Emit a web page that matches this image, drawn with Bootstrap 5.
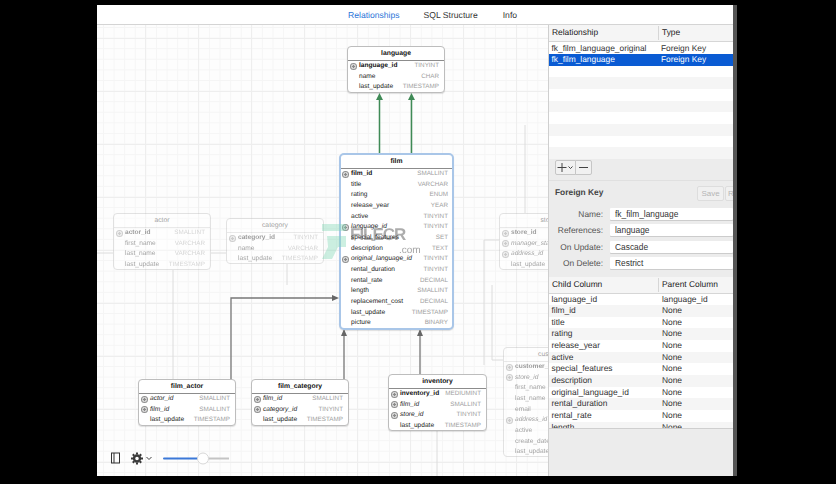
<!DOCTYPE html>
<html lang="en">
<head>
<meta charset="utf-8">
<title>Relationships</title>
<link href="https://cdn.jsdelivr.net/npm/bootstrap@5.3.0/dist/css/bootstrap.min.css" rel="stylesheet">
<style>
html,body{height:100%;}
body{background:#000;font-family:"Liberation Sans",Arial,sans-serif;font-size:8.4px;color:#222;overflow:hidden;text-rendering:geometricPrecision;}
.app-window{margin-left:97px;margin-top:5px;width:640px;height:471px;background:#ececec;filter:blur(.35px);border-right:4px solid #555;}
.top-tabs{height:20px;background:#fff;border-bottom:1px solid #d4d4d4;flex:none;}
.top-tabs .nav-link{padding:0;font-size:8.6px;color:#333;line-height:20px;}
.top-tabs .nav-link.active{color:#2a74d8;}
.tab-a{margin-left:251px;}
.tab-b{margin-left:24px;}
.tab-c{margin-left:25px;}
.work{min-height:0;}
.canvas{position:relative;width:452px;flex:none;overflow:hidden;background-color:#fdfdfd;
 background-image:linear-gradient(90deg,#eeeeee 1px,transparent 1px),linear-gradient(#eeeeee 1px,transparent 1px),linear-gradient(90deg,#f5f5f5 1px,transparent 1px),linear-gradient(#f5f5f5 1px,transparent 1px);
 background-size:53px 53px,53px 53px,10.6px 10.6px,10.6px 10.6px;background-position:48px 13px,48px 13px,6px 2px,6px 2px;border-right:1px solid #cfcfcf;}
.links{position:absolute;left:0;top:0;width:452px;height:451px;}
.erd{position:absolute;background:#fff;border:1px solid #bdbdbd;border-radius:4px;font-size:6.6px;line-height:10.67px;box-shadow:0 1px 1px rgba(0,0,0,.12);z-index:1;}
.erd-h{height:14px;line-height:13px;font-size:6.8px;font-weight:700;text-align:center;border-bottom:1px solid #8c8c8c;color:#111;white-space:nowrap;overflow:hidden;}
.erd-r{position:relative;display:flex;justify-content:space-between;padding-left:11px;padding-right:5px;height:10.67px;white-space:nowrap;color:#222;}
.erd-r>span:last-child{color:#a0a0a0;font-size:6.3px;}
.erd-r.pk>span:first-child{font-weight:700;color:#111;}
.erd-r.fk>span:first-child{font-style:italic;}
.erd-r.pk::before,.erd-r.fk::before{content:"";position:absolute;left:1.5px;top:1.7px;width:7px;height:7px;border-radius:50%;background:radial-gradient(circle,#8a8a8a 0 1px,#cfcfcf 1.4px 2.4px,#8e8e8e 3px);}
.faded{opacity:.42;box-shadow:none;}
.faded .erd-h{border-bottom-color:#ccc;font-weight:400;}
.sel{border:2px solid #a9c6e8;border-radius:5px;}
.sel .erd-r{padding-left:10px;padding-right:4px;}
.sel .erd-r.pk::before,.sel .erd-r.fk::before{left:.5px;}
.n-language{left:250px;top:21px;width:98px;height:47px;}
.n-film{left:242px;top:128px;width:115px;height:177px;}
.n-actor{left:16px;top:188px;width:98px;height:57px;}
.n-category{left:129px;top:193px;width:98px;height:46px;}
.n-store{left:402px;top:188px;width:98px;height:57px;}
.n-fa{left:41px;top:354px;width:98px;height:47px;}
.n-fc{left:154px;top:354px;width:98px;height:47px;}
.n-inv{left:291px;top:349px;width:99px;height:57px;}
.n-cust{left:406px;top:322px;width:98px;height:110px;}
.wm{position:absolute;z-index:2;pointer-events:none;white-space:nowrap;}
.wm-text{left:253px;top:199px;font-size:17px;font-weight:700;color:rgba(70,70,70,.45);line-height:22px;letter-spacing:-1px;}
.wm-com{left:302px;top:220px;font-size:10px;color:rgba(70,70,70,.5);line-height:11px;}
.wm-shape{left:225px;top:198px;width:24px;height:37px;}
.tool-side{position:absolute;left:13px;top:427px;z-index:3;}
.tool-gear{position:absolute;left:33px;top:425px;width:26px;height:17px;z-index:3;}
.zoomer{position:absolute;left:66px;top:425px;width:66px;height:17px;z-index:3;}
.side{width:184px;flex:none;overflow:hidden;}
.grid-h{height:17px;flex:none;background:#f5f5f5;border-bottom:1px solid #d6d6d6;line-height:15px;font-size:8.4px;}
.grid-h>div{padding-left:3px;}
.c1{width:109px;flex:none;white-space:nowrap;overflow:hidden;}
.c2{flex:1;white-space:nowrap;}
.grid-h .c2{border-left:1px solid #d6d6d6;margin:1px 0;line-height:13px;}
.rows-top{height:111px;flex:none;background:#fff;border-bottom:1px solid #cfcfcf;padding-top:.5px;}
.rows-bot{height:135px;flex:none;overflow:hidden;background:#fff;border-bottom:1px solid #cfcfcf;}
.grid-r{height:11.67px;line-height:11.67px;font-size:8.4px;color:#333;}
.grid-r .c1{padding-left:2.5px;}
.grid-r .c2{padding-left:4px;}
.rows-top .grid-r .c2{padding-left:3px;}
.grid-r.alt{background:#f5f5f5;}
.grid-r.pick{background:#0a5bd3;color:#fff;}
.act-bar{height:28px;flex:none;padding:7px 0 0 6px;border-bottom:1px solid #e0e0e0;}
.act-bar .btn-group{height:15px;}
.act-bar .btn{padding:0;height:15px;border:1px solid #c6c6c6;border-radius:2px;background:#f1f1f1;display:flex;align-items:center;justify-content:center;}
.act-add{width:21px;}
.act-del{width:17px;}
.fk-head{height:27px;flex:none;padding-left:6px;}
.fk-title{font-weight:700;font-size:8.4px;color:#444;line-height:22px;width:142px;flex:none;white-space:nowrap;}
.fk-btn{height:15px;flex:none;padding:0;font-size:8px;color:#b5b5b5;background:#f0f0f0;border:1px solid #ddd;border-radius:2px;line-height:13px;margin-top:5px;}
.fk-save{width:27px;}
.fk-rev{width:27px;margin-left:1px;text-align:left;padding-left:2px;}
.fk-form{flex:none;height:68.500px;}
.fk-line{height:16.400px;align-items:flex-start;}
.fk-line label{width:54px;flex:none;text-align:right;color:#555;font-size:8.4px;line-height:12px;}
.fk-line .form-control{margin-left:7px;width:123px;height:12px;min-height:0;padding:0 0 0 5px;font-size:8.4px;line-height:12px;border:0;border-radius:1px;color:#333;background:#fff;box-shadow:0 1px 0 #ccc;}
</style>
</head>
<body>
<div class="app-window d-flex flex-column">
  <ul class="nav top-tabs">
    <li class="nav-item tab-a"><a class="nav-link active" href="#">Relationships</a></li>
    <li class="nav-item tab-b"><a class="nav-link" href="#">SQL Structure</a></li>
    <li class="nav-item tab-c"><a class="nav-link" href="#">Info</a></li>
  </ul>
  <div class="work d-flex flex-grow-1">
    <div class="canvas">
      <svg class="links" viewBox="0 0 452 451" fill="none">
        <g stroke="#dcdcdc" stroke-width="1">
          <path d="M76 245V354M190 239V260M0 228H16M114 228H129M387 215H402M428 188V100M387 215V340M395 260V335H406M340 406V451"/>
        </g>
        <g stroke="#3f8a56" stroke-width="1.500">
          <path d="M282.500 128V74M314.500 128V74"/>
        </g>
        <path d="M282.500 68l-3.500 7h7zM314.500 68l-3.500 7h7z" fill="#3f8a56"/>
        <g stroke="#777" stroke-width="1.300">
          <path d="M134 354V273H236M247 354V310M323 349V310"/>
        </g>
        <path d="M242 273l-7-3v6zM247 304l-3 7h6zM323 304l-3 7h6z" fill="#666"/>
      </svg>

      <div class="erd n-language">
        <div class="erd-h">language</div>
        <div class="erd-r pk"><span>language_id</span><span>TINYINT</span></div>
        <div class="erd-r"><span>name</span><span>CHAR</span></div>
        <div class="erd-r"><span>last_update</span><span>TIMESTAMP</span></div>
      </div>

      <div class="erd sel n-film">
        <div class="erd-h">film</div>
        <div class="erd-r pk"><span>film_id</span><span>SMALLINT</span></div>
        <div class="erd-r"><span>title</span><span>VARCHAR</span></div>
        <div class="erd-r"><span>rating</span><span>ENUM</span></div>
        <div class="erd-r"><span>release_year</span><span>YEAR</span></div>
        <div class="erd-r"><span>active</span><span>TINYINT</span></div>
        <div class="erd-r fk"><span>language_id</span><span>TINYINT</span></div>
        <div class="erd-r"><span>special_features</span><span>SET</span></div>
        <div class="erd-r"><span>description</span><span>TEXT</span></div>
        <div class="erd-r fk"><span>original_language_id</span><span>TINYINT</span></div>
        <div class="erd-r"><span>rental_duration</span><span>TINYINT</span></div>
        <div class="erd-r"><span>rental_rate</span><span>DECIMAL</span></div>
        <div class="erd-r"><span>length</span><span>SMALLINT</span></div>
        <div class="erd-r"><span>replacement_cost</span><span>DECIMAL</span></div>
        <div class="erd-r"><span>last_update</span><span>TIMESTAMP</span></div>
        <div class="erd-r"><span>picture</span><span>BINARY</span></div>
      </div>

      <div class="erd faded n-actor">
        <div class="erd-h">actor</div>
        <div class="erd-r pk"><span>actor_id</span><span>SMALLINT</span></div>
        <div class="erd-r"><span>first_name</span><span>VARCHAR</span></div>
        <div class="erd-r"><span>last_name</span><span>VARCHAR</span></div>
        <div class="erd-r"><span>last_update</span><span>TIMESTAMP</span></div>
      </div>

      <div class="erd faded n-category">
        <div class="erd-h">category</div>
        <div class="erd-r pk"><span>category_id</span><span>TINYINT</span></div>
        <div class="erd-r"><span>name</span><span>VARCHAR</span></div>
        <div class="erd-r"><span>last_update</span><span>TIMESTAMP</span></div>
      </div>

      <div class="erd faded n-store">
        <div class="erd-h">store</div>
        <div class="erd-r pk"><span>store_id</span><span>TINYINT</span></div>
        <div class="erd-r fk"><span>manager_staff_id</span><span>TINYINT</span></div>
        <div class="erd-r fk"><span>address_id</span><span>SMALLINT</span></div>
        <div class="erd-r"><span>last_update</span><span>TIMESTAMP</span></div>
      </div>

      <div class="erd n-fa">
        <div class="erd-h">film_actor</div>
        <div class="erd-r fk"><span>actor_id</span><span>SMALLINT</span></div>
        <div class="erd-r fk"><span>film_id</span><span>SMALLINT</span></div>
        <div class="erd-r"><span>last_update</span><span>TIMESTAMP</span></div>
      </div>

      <div class="erd n-fc">
        <div class="erd-h">film_category</div>
        <div class="erd-r fk"><span>film_id</span><span>SMALLINT</span></div>
        <div class="erd-r fk"><span>category_id</span><span>TINYINT</span></div>
        <div class="erd-r"><span>last_update</span><span>TIMESTAMP</span></div>
      </div>

      <div class="erd n-inv">
        <div class="erd-h">inventory</div>
        <div class="erd-r pk"><span>inventory_id</span><span>MEDIUMINT</span></div>
        <div class="erd-r fk"><span>film_id</span><span>SMALLINT</span></div>
        <div class="erd-r fk"><span>store_id</span><span>TINYINT</span></div>
        <div class="erd-r"><span>last_update</span><span>TIMESTAMP</span></div>
      </div>

      <div class="erd faded n-cust">
        <div class="erd-h">customer</div>
        <div class="erd-r pk"><span>customer_id</span><span>SMALLINT</span></div>
        <div class="erd-r fk"><span>store_id</span><span>TINYINT</span></div>
        <div class="erd-r"><span>first_name</span><span>VARCHAR</span></div>
        <div class="erd-r"><span>last_name</span><span>VARCHAR</span></div>
        <div class="erd-r"><span>email</span><span>VARCHAR</span></div>
        <div class="erd-r fk"><span>address_id</span><span>SMALLINT</span></div>
        <div class="erd-r"><span>active</span><span>BOOLEAN</span></div>
        <div class="erd-r"><span>create_date</span><span>DATETIME</span></div>
        <div class="erd-r"><span>last_update</span><span>TIMESTAMP</span></div>
      </div>

      <svg class="wm wm-shape" viewBox="0 0 24 37"><path d="M0 1H24V8H0zM5 13H24V24H16L10 36H0L6 24z" fill="#7fd8b4" opacity=".4"/></svg>
      <div class="wm wm-text">FILECR</div>
      <div class="wm wm-com">.com</div>

      <svg class="tool-side" width="11" height="12" viewBox="0 0 11 12" fill="none"><rect x="1.500" y="1" width="8" height="10" stroke="#333"/><path d="M4 1V11" stroke="#333"/></svg>
      <svg class="tool-gear" viewBox="0 0 26 17" fill="none">
        <circle cx="7" cy="8.500" r="3" stroke="#3a3a3a" stroke-width="2.400"/>
        <path d="M7 2.500V4.500M7 12.500V14.500M1 8.500H3M11 8.500H13M2.800 4.300L4.200 5.700M9.800 11.300L11.200 12.700M2.800 12.700L4.200 11.300M9.800 5.700L11.200 4.300" stroke="#3a3a3a" stroke-width="2"/>
        <path d="M16.500 7L19 9.500L21.500 7" stroke="#444" stroke-width="1"/>
      </svg>
      <svg class="zoomer" viewBox="0 0 66 17" fill="none">
        <path d="M1 8.500H36" stroke="#3b78d8" stroke-width="2" stroke-linecap="round"/>
        <path d="M42 8.500H66" stroke="#c4c4c4" stroke-width="2"/>
        <circle cx="40" cy="8.500" r="5.500" fill="#fff" stroke="#d8d8d8"/>
      </svg>
    </div>

    <div class="side d-flex flex-column">
      <div class="grid-h d-flex"><div class="c1">Relationship</div><div class="c2">Type</div></div>
      <div class="rows-top">
        <div class="grid-r d-flex"><div class="c1">fk_film_language_original</div><div class="c2">Foreign Key</div></div>
        <div class="grid-r pick d-flex"><div class="c1">fk_film_language</div><div class="c2">Foreign Key</div></div>
        <div class="grid-r"></div>
        <div class="grid-r alt"></div>
        <div class="grid-r"></div>
        <div class="grid-r alt"></div>
        <div class="grid-r"></div>
        <div class="grid-r alt"></div>
        <div class="grid-r"></div>
        <div class="grid-r alt"></div>
      </div>
      <div class="act-bar">
        <div class="btn-group" role="group">
          <button type="button" class="btn act-add"><svg width="17" height="11" viewBox="0 0 17 11" fill="none"><path d="M5 1V10M.5 5.500H9.500" stroke="#444" stroke-width="1"/><path d="M11.500 4.500L13.500 6.500L15.500 4.500" stroke="#444"/></svg></button>
          <button type="button" class="btn act-del"><svg width="11" height="3" viewBox="0 0 11 3"><path d="M1 1.500H10" stroke="#444"/></svg></button>
        </div>
      </div>
      <div class="fk-head d-flex">
        <span class="fk-title">Foreign Key</span>
        <button type="button" class="fk-btn fk-save" disabled>Save</button>
        <button type="button" class="fk-btn fk-rev" disabled>Revert</button>
      </div>
      <div class="fk-form">
        <div class="fk-line d-flex"><label>Name:</label><input class="form-control" value="fk_film_language"></div>
        <div class="fk-line d-flex"><label>References:</label><input class="form-control" value="language"></div>
        <div class="fk-line d-flex"><label>On Update:</label><input class="form-control" value="Cascade"></div>
        <div class="fk-line d-flex"><label>On Delete:</label><input class="form-control" value="Restrict"></div>
      </div>
      <div class="grid-h d-flex"><div class="c1">Child Column</div><div class="c2">Parent Column</div></div>
      <div class="rows-bot">
        <div class="grid-r d-flex"><div class="c1">language_id</div><div class="c2">language_id</div></div>
        <div class="grid-r alt d-flex"><div class="c1">film_id</div><div class="c2">None</div></div>
        <div class="grid-r d-flex"><div class="c1">title</div><div class="c2">None</div></div>
        <div class="grid-r alt d-flex"><div class="c1">rating</div><div class="c2">None</div></div>
        <div class="grid-r d-flex"><div class="c1">release_year</div><div class="c2">None</div></div>
        <div class="grid-r alt d-flex"><div class="c1">active</div><div class="c2">None</div></div>
        <div class="grid-r d-flex"><div class="c1">special_features</div><div class="c2">None</div></div>
        <div class="grid-r alt d-flex"><div class="c1">description</div><div class="c2">None</div></div>
        <div class="grid-r d-flex"><div class="c1">original_language_id</div><div class="c2">None</div></div>
        <div class="grid-r alt d-flex"><div class="c1">rental_duration</div><div class="c2">None</div></div>
        <div class="grid-r d-flex"><div class="c1">rental_rate</div><div class="c2">None</div></div>
        <div class="grid-r alt d-flex"><div class="c1">length</div><div class="c2">None</div></div>
      </div>
    </div>
  </div>
</div>
<script src="https://cdn.jsdelivr.net/npm/bootstrap@5.3.0/dist/js/bootstrap.bundle.min.js"></script>
</body>
</html>
